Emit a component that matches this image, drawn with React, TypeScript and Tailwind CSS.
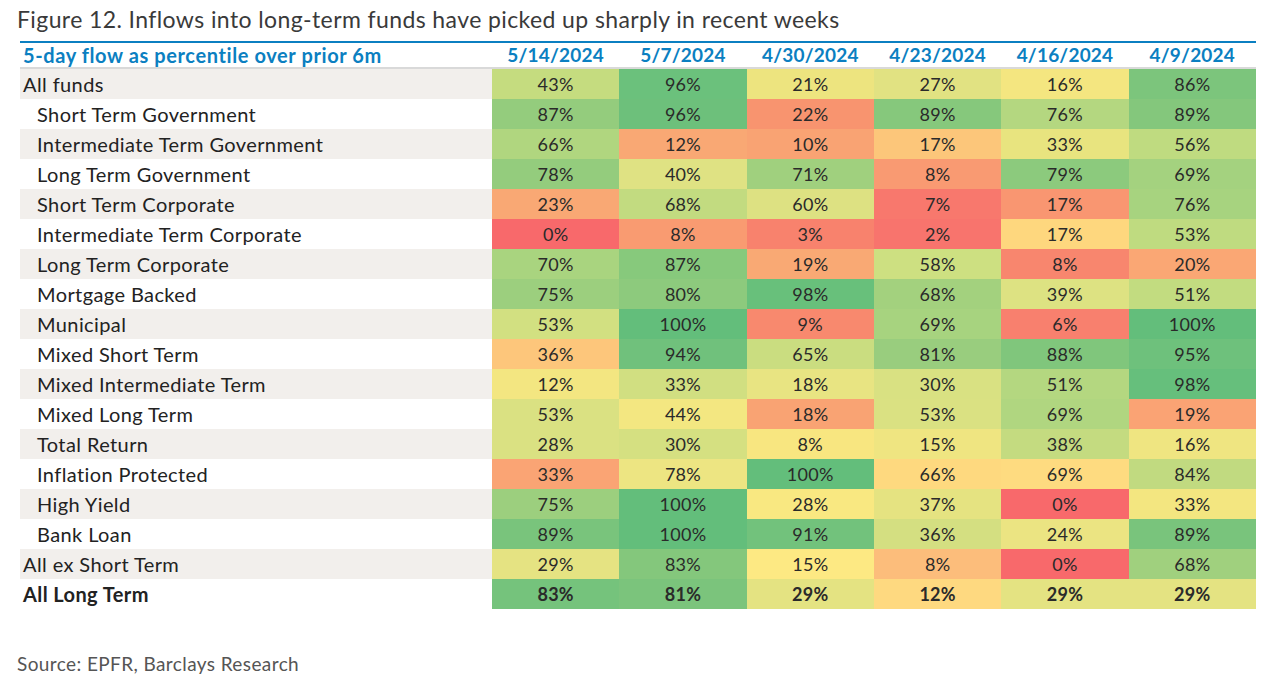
import React from "react";

// 5-day flow percentile heatmap (per-cell colours read off the source chart)
type Cell = [string, string];
type Row = { label: string; indent?: boolean; stripe?: boolean; bold?: boolean; cells: Cell[] };

const dates = ["5/14/2024", "5/7/2024", "4/30/2024", "4/23/2024", "4/16/2024", "4/9/2024"];

const rows: Row[] = [
  { label: "All funds", stripe: true, cells: [["43%", "bg-[#c5dc7f]"], ["96%", "bg-[#6bc17c]"], ["21%", "bg-[#ede47f]"], ["27%", "bg-[#e1e282]"], ["16%", "bg-[#f4e680]"], ["86%", "bg-[#7cc57c]"]] },
  { label: "Short Term Government", indent: true, cells: [["87%", "bg-[#94cc7d]"], ["96%", "bg-[#6dc07b]"], ["22%", "bg-[#f8946f]"], ["89%", "bg-[#86c87c]"], ["76%", "bg-[#b4d780]"], ["89%", "bg-[#84c77c]"]] },
  { label: "Intermediate Term Government", indent: true, stripe: true, cells: [["66%", "bg-[#b0d67f]"], ["12%", "bg-[#f9a874]"], ["10%", "bg-[#f9a373]"], ["17%", "bg-[#fcc67a]"], ["33%", "bg-[#e8e47f]"], ["56%", "bg-[#bfdb80]"]] },
  { label: "Long Term Government", indent: true, cells: [["78%", "bg-[#94cc7d]"], ["40%", "bg-[#dfe283]"], ["71%", "bg-[#a0d07e]"], ["8%", "bg-[#f99a72]"], ["79%", "bg-[#8cca7d]"], ["69%", "bg-[#a4d27f]"]] },
  { label: "Short Term Corporate", indent: true, stripe: true, cells: [["23%", "bg-[#f9a874]"], ["68%", "bg-[#c2db80]"], ["60%", "bg-[#dde182]"], ["7%", "bg-[#f8786d]"], ["17%", "bg-[#f99671]"], ["76%", "bg-[#a7d37f]"]] },
  { label: "Intermediate Term Corporate", indent: true, cells: [["0%", "bg-[#f8696b]"], ["8%", "bg-[#f99b71]"], ["3%", "bg-[#f8826d]"], ["2%", "bg-[#f8746d]"], ["17%", "bg-[#fed77e]"], ["53%", "bg-[#bfdb80]"]] },
  { label: "Long Term Corporate", indent: true, stripe: true, cells: [["70%", "bg-[#a9d47f]"], ["87%", "bg-[#87c97c]"], ["19%", "bg-[#f9a974]"], ["58%", "bg-[#cde081]"], ["8%", "bg-[#f8866e]"], ["20%", "bg-[#faa774]"]] },
  { label: "Mortgage Backed", indent: true, cells: [["75%", "bg-[#9ccf7e]"], ["80%", "bg-[#8dca7d]"], ["98%", "bg-[#68c07b]"], ["68%", "bg-[#a3d17e]"], ["39%", "bg-[#dde282]"], ["51%", "bg-[#c2dc80]"]] },
  { label: "Municipal", indent: true, stripe: true, cells: [["53%", "bg-[#d2e081]"], ["100%", "bg-[#63be7b]"], ["9%", "bg-[#f8896e]"], ["69%", "bg-[#a7d37f]"], ["6%", "bg-[#f8806e]"], ["100%", "bg-[#63be7b]"]] },
  { label: "Mixed Short Term", indent: true, cells: [["36%", "bg-[#fdc67b]"], ["94%", "bg-[#70c17c]"], ["65%", "bg-[#cadd80]"], ["81%", "bg-[#99cd7e]"], ["88%", "bg-[#80c67c]"], ["95%", "bg-[#6ec17c]"]] },
  { label: "Mixed Intermediate Term", indent: true, stripe: true, cells: [["12%", "bg-[#f3e681]"], ["33%", "bg-[#d1df81]"], ["18%", "bg-[#e8e482]"], ["30%", "bg-[#d9e182]"], ["51%", "bg-[#b4d780]"], ["98%", "bg-[#66bf7c]"]] },
  { label: "Mixed Long Term", indent: true, cells: [["53%", "bg-[#dae182]"], ["44%", "bg-[#f3e781]"], ["18%", "bg-[#f9a373]"], ["53%", "bg-[#dae182]"], ["69%", "bg-[#b0d680]"], ["19%", "bg-[#faa374]"]] },
  { label: "Total Return", indent: true, stripe: true, cells: [["28%", "bg-[#dae182]"], ["30%", "bg-[#d5e081]"], ["8%", "bg-[#f8e680]"], ["15%", "bg-[#efe581]"], ["38%", "bg-[#c4db80]"], ["16%", "bg-[#efe581]"]] },
  { label: "Inflation Protected", indent: true, cells: [["33%", "bg-[#faa474]"], ["78%", "bg-[#ede582]"], ["100%", "bg-[#63be7b]"], ["66%", "bg-[#fed97f]"], ["69%", "bg-[#fedb80]"], ["84%", "bg-[#c1da80]"]] },
  { label: "High Yield", indent: true, stripe: true, cells: [["75%", "bg-[#9ccf7e]"], ["100%", "bg-[#63be7b]"], ["28%", "bg-[#f9e881]"], ["37%", "bg-[#e5e381]"], ["0%", "bg-[#f8696b]"], ["33%", "bg-[#f3e680]"]] },
  { label: "Bank Loan", indent: true, cells: [["89%", "bg-[#79c47c]"], ["100%", "bg-[#63be7b]"], ["91%", "bg-[#72c27c]"], ["36%", "bg-[#d4df81]"], ["24%", "bg-[#ebe482]"], ["89%", "bg-[#79c47c]"]] },
  { label: "All ex Short Term", stripe: true, cells: [["29%", "bg-[#e5e382]"], ["83%", "bg-[#84c77c]"], ["15%", "bg-[#fde983]"], ["8%", "bg-[#fcbd7b]"], ["0%", "bg-[#f8696b]"], ["68%", "bg-[#a0d07e]"]] },
  { label: "All Long Term", bold: true, cells: [["83%", "bg-[#75c37c]"], ["81%", "bg-[#7bc47c]"], ["29%", "bg-[#e4e382]"], ["12%", "bg-[#fed980]"], ["29%", "bg-[#e4e382]"], ["29%", "bg-[#e4e382]"]] },
];

export default function App() {
  return (
    <div className="w-[1276px] h-[678px] bg-white font-['Lato',sans-serif] text-[#333]">
      <div className="pl-[17px] pt-[5px] h-[41px] text-[23px] leading-[28px] tracking-[0.4px] text-[#3a3a3a]">
        Figure 12. Inflows into long-term funds have picked up sharply in recent weeks
      </div>

      <div className="ml-[20px] w-[1236px] border-t-2 border-[#0b7fc1]">
        {/* header */}
        <div className="flex h-[26px] items-center border-b-2 border-[#d9d9d9] font-bold text-[#0b7fc1]">
          <div className="w-[472px] pl-[3px] text-[20px] tracking-[0.6px]">5-day flow as percentile over prior 6m</div>
          {dates.map((d) => (
            <div key={d} className="flex-1 text-center text-[19px] tracking-[0.2px]">
              {d}
            </div>
          ))}
        </div>

        {rows.map((r) => (
          <div key={r.label} className="flex h-[30px]">
            <div
              className={
                "w-[472px] flex items-center text-[20px] tracking-[0.4px] text-[#222] " +
                (r.indent ? "pl-[17px] " : "pl-[3px] ") +
                (r.stripe ? "bg-[#f2efec] " : "bg-white ") +
                (r.bold ? "font-bold" : "")
              }
            >
              {r.label}
            </div>
            {r.cells.map(([v, bg], i) => (
              <div
                key={i}
                className={
                  "flex-1 flex items-center justify-center text-[18px] tracking-[0.3px] text-[#2a2a2a] " +
                  bg +
                  (r.bold ? " font-bold" : "")
                }
              >
                {v}
              </div>
            ))}
          </div>
        ))}
      </div>

      <div className="pl-[17px] pt-[41px] text-[19px] tracking-[0.4px] text-[#555]">Source: EPFR, Barclays Research</div>
    </div>
  );
}
